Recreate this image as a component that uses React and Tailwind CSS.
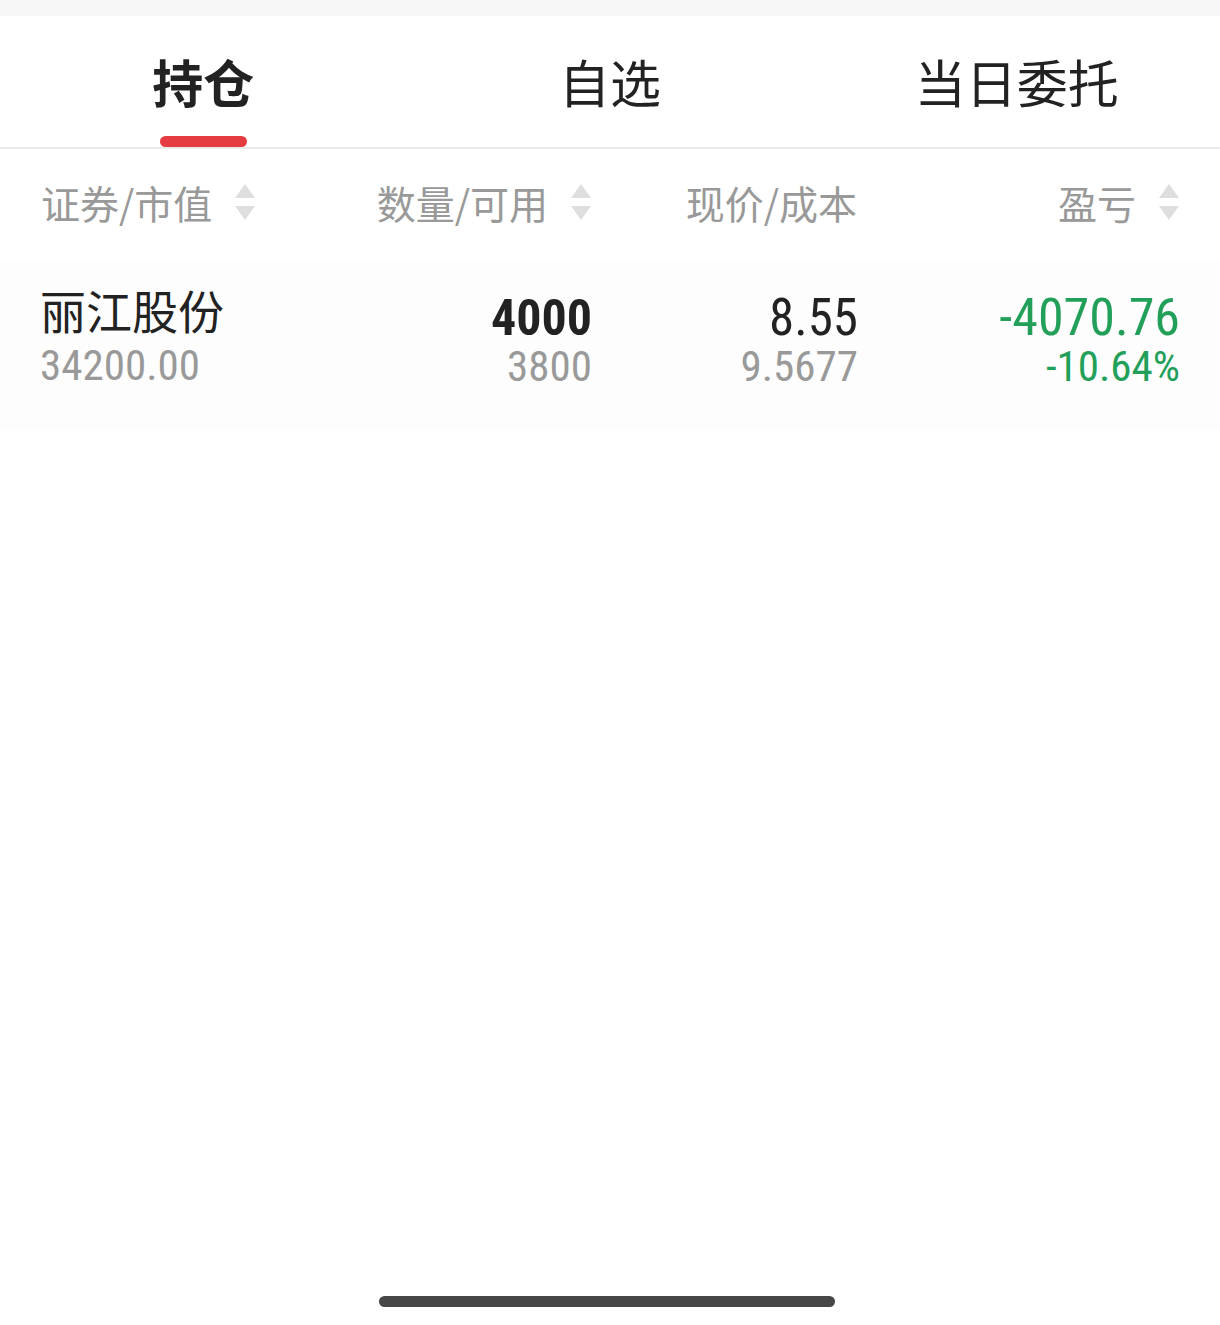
import React from "react";

const CJK = { fontFamily: '"Noto Sans CJK SC", "Noto Sans", sans-serif' };
const num = "[font-family:'Roboto_Condensed','Liberation_Sans_Narrow',Roboto,sans-serif]";

function SortIcon() {
  return (
    <svg width="20" height="38" viewBox="0 0 20 38" className="ml-[23px] shrink-0">
      <path d="M10 1 L20 15 L0 15 Z" fill="#dedede" />
      <path d="M0 23 L20 23 L10 37 Z" fill="#dedede" />
    </svg>
  );
}

function Tab({ label, active }) {
  return (
    <div className="flex flex-col items-center pt-[39px]">
      <div
        className={`h-[52px] flex items-center text-[51px] leading-[52px] text-[#222222] ${active ? "font-bold" : "font-normal"}`}
        style={CJK}
      >
        {label}
      </div>
      <div className={`mt-[29px] h-[11px] w-[87px] rounded-full ${active ? "bg-[#e53c42]" : "bg-transparent"}`} />
    </div>
  );
}

export default function App() {
  return (
    <div className="w-[1220px] h-[1325px] bg-white flex flex-col overflow-hidden" style={CJK}>
      <div className="h-4 bg-[#f7f7f7]" />
      <div className="grid grid-cols-3 border-b-2 border-[#ebebeb]">
        <Tab label="持仓" active />
        <Tab label="自选" />
        <Tab label="当日委托" />
      </div>

      <div className="grid grid-cols-[280px_271px_266px_322px] pl-[40px] pr-[40px] h-[112px] pb-[6px] items-center text-[39px] leading-[40px] text-[#999999]">
        <div className="flex items-center pl-px">
          <span>证券/市值</span>
          <SortIcon />
        </div>
        <div className="flex items-center justify-end">
          <span>数量/可用</span>
          <SortIcon />
        </div>
        <div className="flex items-center justify-end">
          <span>现价/成本</span>
        </div>
        <div className="flex items-center justify-end">
          <span>盈亏</span>
          <SortIcon />
        </div>
      </div>

      <div className="grid grid-cols-[281px_271px_266px_322px] pl-[40px] pr-[40px] h-[169px] bg-[#fdfdfd]">
        <div className="flex flex-col pt-[23px]">
          <div className="h-[50px] flex items-center text-[46px] leading-[50px] text-[#222222]" style={CJK}>
            丽江股份
          </div>
          <div className={`mt-[6px] h-[50px] flex items-center text-[43px] leading-[50px] text-[#999999] ${num}`}>34200.00</div>
        </div>
        <div className="flex flex-col items-end pt-[32px]">
          <div className={`h-[50px] flex items-center text-[50px] leading-[50px] font-bold text-[#222222] ${num}`}>4000</div>
          <div className={`h-[46px] flex items-center text-[43px] leading-[46px] text-[#999999] ${num}`}>3800</div>
        </div>
        <div className="flex flex-col items-end pt-[32px]">
          <div className={`h-[50px] flex items-center text-[51px] leading-[50px] text-[#222222] ${num}`}>8.55</div>
          <div className={`h-[46px] flex items-center text-[43px] leading-[46px] text-[#999999] ${num}`}>9.5677</div>
        </div>
        <div className="flex flex-col items-end pt-[32px]">
          <div className={`h-[50px] flex items-center text-[52px] leading-[50px] font-normal text-[#22a05a] ${num}`}>-4070.76</div>
          <div className={`h-[46px] flex items-center text-[43px] leading-[46px] font-normal text-[#22a05a] ${num}`}>-10.64%</div>
        </div>
      </div>

      <div className="mt-auto mb-[18px] ml-[379px] w-[456px] h-[11px] rounded-full bg-[#474747]" />
    </div>
  );
}
